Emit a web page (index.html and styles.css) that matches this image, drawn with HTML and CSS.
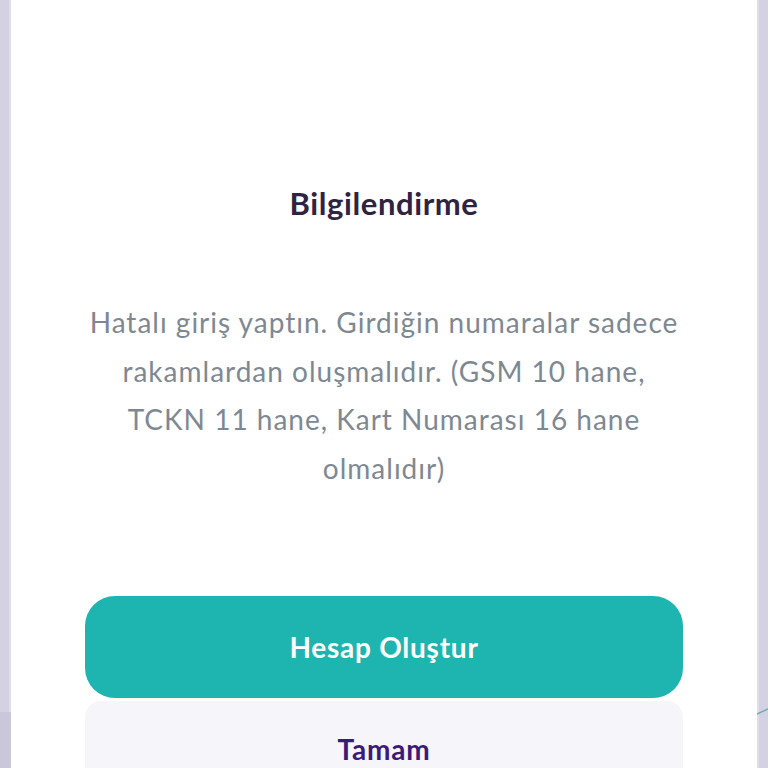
FILE: index.html
```html
<!DOCTYPE html>
<html lang="tr">
<head>
<meta charset="utf-8">
<link rel="stylesheet" href="styles.css">
</head>
<body>
<div class="screen">
  <div class="side side-left"><div class="side-low"></div></div>
  <main class="card">
    <h1 class="title">Bilgilendirme</h1>
    <p class="message">Hatalı giriş yaptın. Girdiğin numaralar sadece<br>rakamlardan oluşmalıdır. (GSM 10 hane,<br>TCKN 11 hane, Kart Numarası 16 hane<br>olmalıdır)</p>
    <div class="actions">
      <button class="btn btn-primary">Hesap Oluştur</button>
      <button class="btn btn-secondary">Tamam</button>
    </div>
  </main>
  <div class="side side-right">
    <svg class="side-line" width="11" height="12" viewBox="0 0 11 12"><path d="M0 7 L11 2" stroke="#6fa9b4" stroke-width="1.4" fill="none"/></svg>
  </div>
</div>
</body>
</html>
```
FILE: styles.css
```css
* { box-sizing: border-box; }
html, body { margin: 0; padding: 0; }
body {
  width: 768px;
  height: 768px;
  overflow: hidden;
  background: #d4d1e2;
  font-family: Lato, "Noto Sans", sans-serif;
}
.screen {
  display: flex;
  height: 768px;
  overflow: hidden;
}
.side {
  width: 11px;
  flex: none;
  background: #d4d1e2;
  display: flex;
  flex-direction: column;
}
.side-left {
  justify-content: flex-end;
  box-shadow: inset -2px 0 0 #e0dde9;
}
.side-low {
  height: 56px;
  background: #cbc7db;
}
.side-right {
  padding-top: 707px;
  box-shadow: inset 2px 0 0 #e0dde9;
}
.side-line { display: block; }
.card {
  flex: 1;
  background: #ffffff;
  padding: 185px 74px 0;
  display: flex;
  flex-direction: column;
  align-items: center;
  overflow: hidden;
}
.title {
  margin: 0;
  font-size: 31px;
  font-weight: 700;
  letter-spacing: 0.6px;
  line-height: 36px;
  color: #2e2442;
}
.message {
  margin: 77px 0 0;
  text-align: center;
  font-size: 28px;
  letter-spacing: 1px;
  line-height: 48.5px;
  color: #7e8893;
  white-space: nowrap;
}
.actions {
  margin-top: 104px;
  width: 100%;
  display: flex;
  flex-direction: column;
  gap: 3px;
  flex: none;
}
.btn {
  width: 100%;
  border: none;
  font-family: inherit;
  font-size: 28px;
  font-weight: 700;
  letter-spacing: 0.75px;
  padding: 0;
}
.btn-primary {
  height: 102px;
  border-radius: 30px;
  background: #1eb5b0;
  color: #ffffff;
}
.btn-secondary {
  height: 96px;
  border-radius: 16px;
  background: #f5f5fa;
  color: #3c1a78;
}
```
